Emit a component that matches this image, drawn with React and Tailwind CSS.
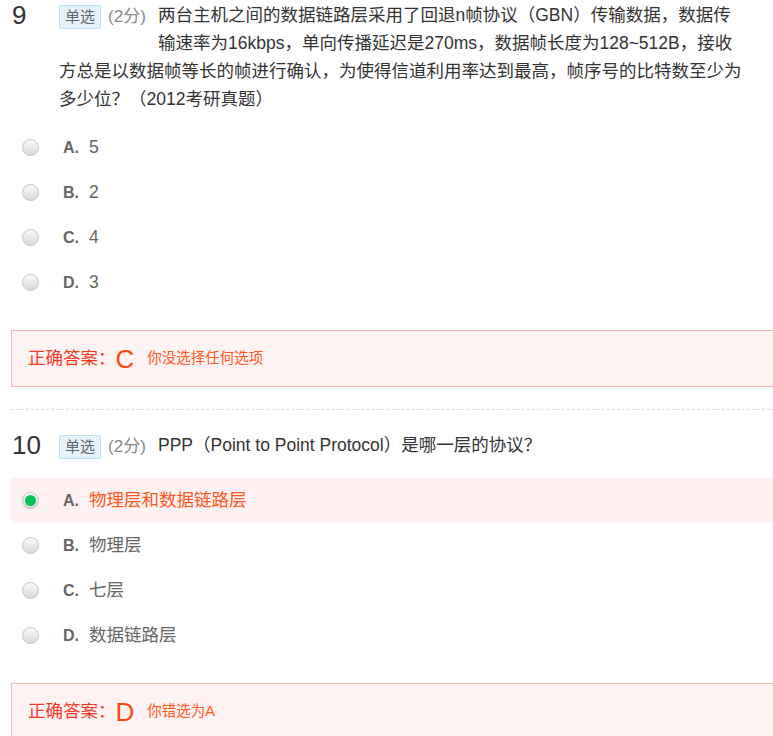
const FONT = "font-['Liberation_Sans','Noto_Sans_CJK_SC',sans-serif]";

const questions = [
  {
    no: 9,
    // line breaks follow the original wrap
    title: [
      '两台主机之间的数据链路层采用了回退n帧协议（GBN）传输数据，数据传',
      '输速率为16kbps，单向传播延迟是270ms，数据帧长度为128~512B，接收',
      '方总是以数据帧等长的帧进行确认，为使得信道利用率达到最高，帧序号的比特数至少为',
      '多少位？（2012考研真题）',
    ],
    options: [
      { key: 'A', text: '5' },
      { key: 'B', text: '2' },
      { key: 'C', text: '4' },
      { key: 'D', text: '3' },
    ],
    picked: null,
    answer: 'C',
    note: '你没选择任何选项',
  },
  {
    no: 10,
    title: ['PPP（Point to Point Protocol）是哪一层的协议？'],
    options: [
      { key: 'A', text: '物理层和数据链路层' },
      { key: 'B', text: '物理层' },
      { key: 'C', text: '七层' },
      { key: 'D', text: '数据链路层' },
    ],
    picked: 'A',
    answer: 'D',
    note: '你错选为A',
  },
]

function Radio({ checked }) {
  return (
    <span className="shrink-0 w-[17px] h-[17px] rounded-full border border-[#c4c4c4] bg-gradient-to-b from-[#fafafa] to-[#d9d9d9] flex items-center justify-center">
      {checked && <span className="w-[11px] h-[11px] rounded-full bg-[#08c252]" />}
    </span>
  )
}

function Question({ q }) {
  return (
    <div>
      <div className="flex">
        <div className="w-[48px] shrink-0 text-[26px] leading-[28px] text-[#333] pl-px">{q.no}</div>
        <div className="w-[700px] flow-root text-[17.5px] leading-[28px] text-[#333] whitespace-nowrap">
          <span className="float-left h-[35px] flex items-start pt-[4px] w-[99px]">
            <span className="h-[24px] px-[5px] text-[15px] leading-[22px] text-[#666] bg-[#e5f3fd] border border-[#bde0f8] rounded-[2px]">
              单选
            </span>
            <span className="ml-[7px] text-[17px] leading-[24px] text-[#888]">(2分)</span>
          </span>
          {q.title.map((line, i) => (
            <span key={i}>
              {line}
              {i < q.title.length - 1 && <br />}
            </span>
          ))}
        </div>
      </div>
      <div className="mt-[12px]">
        {q.options.map((o) => {
          const sel = q.picked === o.key
          return (
            <div
              key={o.key}
              className={`h-[45px] flex items-center pl-[11px] ${sel ? 'bg-[#fff1f1]' : ''}`}
            >
              <Radio checked={sel} />
              <span className="ml-[24px] w-[26px] text-[16px] font-bold text-[#666]">{o.key}.</span>
              <span className={`text-[17.5px] ${sel ? 'text-[#fa5a22]' : 'text-[#666]'}`}>{o.text}</span>
            </div>
          )
        })}
      </div>
      <div className="mt-[25px] h-[57px] border border-[#f8b8b5] bg-[#fff2f2] flex items-center pl-4">
        <span className="text-[17.5px] text-[#f43a24]">正确答案：</span>
        <span className="text-[26px] leading-none text-[#ff4711]">{q.answer}</span>
        <span className="ml-[13px] text-[14.5px] text-[#ff5a1c]">{q.note}</span>
      </div>
    </div>
  )
}

export default function App() {
  return (
    <div className={`w-[773px] h-[736px] overflow-hidden bg-white ${FONT}`}>
      <div className="w-[800px] pl-[11px] pt-px">
        <Question q={questions[0]} />
        <div className="mt-[22px] border-t border-dashed border-[#dcdcdc]" />
        <div className="mt-[21px]">
          <Question q={questions[1]} />
        </div>
      </div>
    </div>
  )
}
